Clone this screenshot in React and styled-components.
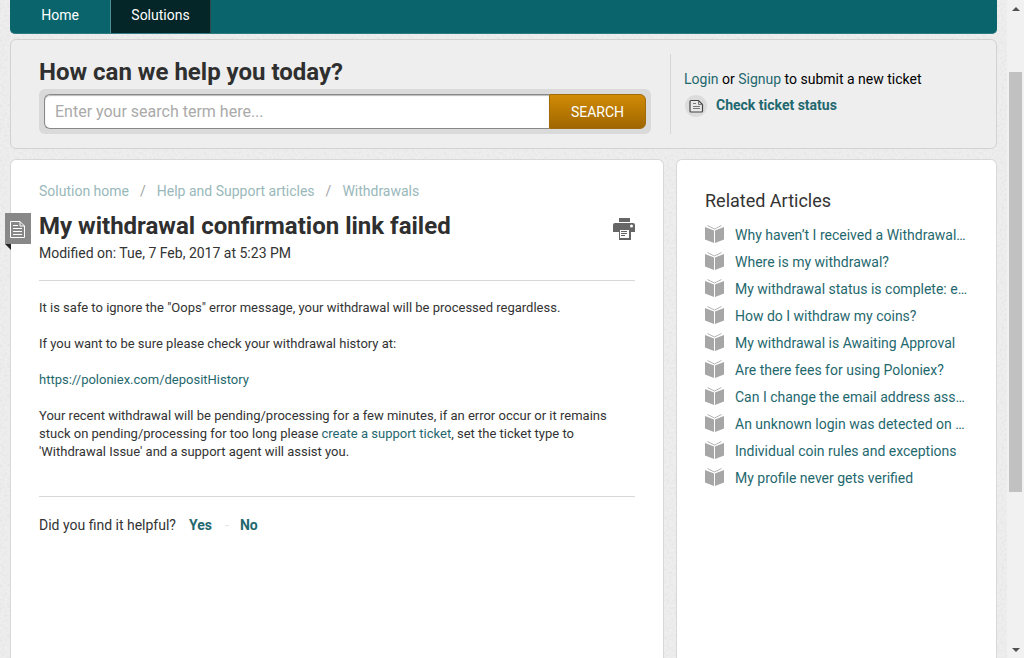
import React from "react";
import styled, { createGlobalStyle } from "styled-components";

const noise = encodeURIComponent(
  `<svg xmlns="http://www.w3.org/2000/svg" width="120" height="120"><filter id="n"><feTurbulence type="fractalNoise" baseFrequency="0.4" numOctaves="2" stitchTiles="stitch"/><feColorMatrix values="0 0 0 0 0.5 0 0 0 0 0.5 0 0 0 0 0.5 0.4 0 0 0 -0.16"/></filter><rect width="120" height="120" filter="url(#n)"/></svg>`
);

const GlobalStyle = createGlobalStyle`
  * {
    box-sizing: border-box;
  }
  body {
    margin: 0;
    overflow: hidden;
    background-color: #eeeeee;
    background-image: url("data:image/svg+xml,${noise}");
    color: #333333;
    font-family: Roboto, "Liberation Sans", sans-serif;
    font-size: 14px;
    line-height: 20px;
  }
`;

const Page = styled.div`
  display: flex;
  height: 100vh;
`;

const Content = styled.div`
  flex: 1;
  min-width: 0;
  padding: 0 10px;
  display: flex;
  flex-direction: column;
`;

const Nav = styled.nav`
  display: flex;
  flex: none;
  height: 34px;
  margin-bottom: 5px;
  overflow: hidden;
  background-color: #0a646b;
  border-bottom: 1px solid #2f7b81;
  border-radius: 0 0 5px 5px;
`;

const NavLink = styled.a`
  width: 100px;
  padding-top: 5px;
  text-align: center;
  text-decoration: none;
  color: #ffffff;
  background-color: ${(props) => (props.$active ? "#042628" : "transparent")};
  border-right: 1px solid ${(props) => (props.$active ? "#2f4a4c" : "#4c9095")};
  &:first-child {
    width: 101px;
  }
`;

const HelpPanel = styled.section`
  display: flex;
  flex: none;
  padding: 14px 28px;
  margin-bottom: 10px;
  background-color: #eeeeee;
  border: 1px solid #d2d2d2;
  border-radius: 6px;
`;

const SearchArea = styled.div`
  flex: 1;
  min-width: 0;
  margin-right: 19px;
`;

const Title = styled.h1`
  margin: 0;
  font-size: 24px;
  line-height: 30px;
  font-weight: 700;
  color: #2f2f2f;
`;

const SearchTitle = styled(Title)`
  padding: 3px 0 2px;
`;

const SearchForm = styled.form`
  display: flex;
  padding: 5px;
  background-color: #dadada;
  border-radius: 6px;
`;

const SearchInput = styled.input`
  flex: 1;
  min-width: 0;
  height: 35px;
  padding: 0 10px;
  font-family: inherit;
  font-size: 16px;
  color: #333333;
  background-color: #ffffff;
  border: 1px solid #888888;
  border-right: 0;
  border-radius: 6px 0 0 6px;
  box-shadow: inset 0 1px 1px #bbbbbb;
  outline: none;
  &::placeholder {
    color: #aaaaaa;
    opacity: 1;
  }
`;

const SearchButton = styled.button`
  width: 97px;
  height: 35px;
  padding: 0;
  font-family: inherit;
  font-size: 14px;
  text-transform: uppercase;
  color: #ffffff;
  background: linear-gradient(#d18b05, #9f6600);
  border: 1px solid #a06b0a;
  border-radius: 0 6px 6px 0;
`;

const AccountArea = styled.div`
  flex: none;
  width: 298px;
  padding: 15px 0 0 13px;
  color: #000000;
  border-left: 1px solid #d6d6d6;
`;

const StyledLink = styled.a`
  color: #1f686e;
  text-decoration: none;
  font-weight: ${(props) => (props.$bold ? 700 : 400)};
`;

const TicketStatus = styled.div`
  display: flex;
  align-items: center;
  gap: 8px;
  margin-top: 4px;
`;

const Columns = styled.div`
  display: grid;
  flex: 1;
  grid-template-columns: minmax(0, 1fr) 321px;
  gap: 12px;
`;

const Card = styled.div`
  position: relative;
  padding: 21px 28px;
  background-color: #ffffff;
  border: 1px solid #d8d8d8;
  border-bottom: 0;
  border-radius: 6px 6px 0 0;
`;

const Breadcrumb = styled.nav`
  display: flex;
  gap: 11px;
  margin-bottom: 10px;
  color: #a2a2a2;
`;

const BreadcrumbLink = styled(StyledLink)`
  color: #99b8ba;
`;

const ArticleHeader = styled.header`
  display: flex;
  align-items: flex-start;
  justify-content: space-between;
  padding-bottom: 17px;
  border-bottom: 1px solid #d8d8d8;
`;

const Modified = styled.div`
  margin-top: 2px;
`;

const PrintButton = styled.button`
  display: flex;
  padding: 0;
  margin-top: 7px;
  background: none;
  border: 0;
`;

const Ribbon = styled.div`
  position: absolute;
  top: 53px;
  left: -6px;
  display: flex;
`;

const ArticleBody = styled.div`
  padding: 18px 0 35px;
  font-size: 13px;
  line-height: 18px;
  border-bottom: 1px solid #d8d8d8;
`;

const Paragraph = styled.p`
  margin: 0;
  & + & {
    margin-top: 18px;
  }
`;

const Feedback = styled.div`
  display: flex;
  gap: 11px;
  padding-top: 18px;
`;

const VoteButton = styled.button`
  padding: 0 2px;
  font: inherit;
  font-weight: 700;
  color: #1f686e;
  background: none;
  border: 0;
`;

const Dash = styled.span`
  width: 2px;
  color: #e4e4e4;
`;

const SidebarTitle = styled.h3`
  margin: 10px 0 14px;
  font-size: 18px;
  font-weight: 400;
`;

const ArticleList = styled.ul`
  margin: 0;
  padding: 0;
  list-style: none;
`;

const ArticleItem = styled.li`
  display: flex;
  gap: 11px;
  height: 27px;
`;

const ArticleLink = styled(StyledLink)`
  flex: 1;
  min-width: 0;
  overflow: hidden;
  text-overflow: ellipsis;
  white-space: nowrap;
`;

const Scrollbar = styled.div`
  display: flex;
  flex: none;
  flex-direction: column;
  align-items: center;
  width: 17px;
  padding: 7px 0 6px;
  background-color: #f1f1f1;
`;

const ScrollTrack = styled.div`
  flex: 1;
  width: 13px;
  padding-top: 61px;
`;

const ScrollThumb = styled.div`
  height: 73%;
  background-color: #c1c1c1;
`;

const Arrow = ({ down }) => (
  <svg width="8" height="4" viewBox="0 0 8 4">
    <path d={down ? "M0 0h8L4 4z" : "M0 4h8L4 0z"} fill="#505050" />
  </svg>
);

const TicketIcon = () => (
  <svg width="24" height="24" viewBox="0 0 24 24" fill="none">
    <circle cx="12" cy="13" r="11" fill="#dcdcdc" />
    <path
      d="M7 7.5h7.5l4 4V18q0 1-1 1H7q-1 0-1-1V8.5q0-1 1-1z"
      fill="#e8e8e8"
      stroke="#444"
      strokeWidth="1.2"
    />
    <path d="M14.5 8v3.5h4M9 10.5h3M9 13.5h7M9 15.5h7" stroke="#777" />
  </svg>
);

const RibbonIcon = () => (
  <svg width="26" height="37" viewBox="0 0 26 37" fill="none">
    <path d="M0 31h6v6z" fill="#222" />
    <path d="M0 0h26v31H0z" fill="#888" />
    <path d="M5.5 8.5H15l4.5 4.5v11.5h-14zM15 8.5V13h4.5" stroke="#fff" />
    <path d="M8 12.5h5M8 15.5h9M8 18.5h9M8 21.5h9" stroke="#fff" />
  </svg>
);

const PrintIcon = () => (
  <svg width="22" height="22" viewBox="0 0 22 22">
    <path d="M6 0h11v4H6z" fill="#666" />
    <path d="M2 5h18q2 0 2 2v7h-4v8H6v-8H0V7q0-2 2-2z" fill="#666" />
    <circle cx="18.5" cy="8" r="1.5" fill="#fff" />
    <path d="M7 12h9v8H7z" fill="#fff" />
    <path d="M8 13.5h6M8 15.5h6M8 17.5h4" stroke="#666" />
  </svg>
);

const BookIcon = () => (
  <svg width="19" height="18" viewBox="0 0 19 18">
    <path d="M0 2l9 3.5V18l-9-3.500zM19 2l-9 3.500V18l9-3.500z" fill="#a6a6a6" />
    <path d="M2.5 .5L9.500 4l7-3.500" fill="none" stroke="#b5b5b5" />
  </svg>
);

const articles = [
  "Why haven’t I received a Withdrawal Confirmation Email?",
  "Where is my withdrawal?",
  "My withdrawal status is complete: error",
  "How do I withdraw my coins?",
  "My withdrawal is Awaiting Approval",
  "Are there fees for using Poloniex?",
  "Can I change the email address associated with my account?",
  "An unknown login was detected on my account",
  "Individual coin rules and exceptions",
  "My profile never gets verified",
];

const App = () => {
  return (
    <>
      <GlobalStyle />
      <Page>
        <Content>
          <Nav>
            <NavLink href="#home">Home</NavLink>
            <NavLink href="#solutions" $active>
              Solutions
            </NavLink>
          </Nav>
          <HelpPanel>
            <SearchArea>
              <SearchTitle as="h2">How can we help you today?</SearchTitle>
              <SearchForm onSubmit={(e) => e.preventDefault()}>
                <SearchInput
                  type="text"
                  aria-label="Search"
                  placeholder="Enter your search term here..."
                />
                <SearchButton type="submit">Search</SearchButton>
              </SearchForm>
            </SearchArea>
            <AccountArea>
              <div>
                <StyledLink href="#login">Login</StyledLink> or{" "}
                <StyledLink href="#signup">Signup</StyledLink> to submit a new
                ticket
              </div>
              <TicketStatus>
                <TicketIcon />
                <StyledLink href="#status" $bold>
                  Check ticket status
                </StyledLink>
              </TicketStatus>
            </AccountArea>
          </HelpPanel>
          <Columns>
            <Card as="main">
              <Ribbon>
                <RibbonIcon />
              </Ribbon>
              <Breadcrumb>
                <BreadcrumbLink href="#solutions">Solution home</BreadcrumbLink>
                <span>/</span>
                <BreadcrumbLink href="#help">
                  Help and Support articles
                </BreadcrumbLink>
                <span>/</span>
                <BreadcrumbLink href="#withdrawals">Withdrawals</BreadcrumbLink>
              </Breadcrumb>
              <ArticleHeader>
                <div>
                  <Title>My withdrawal confirmation link failed</Title>
                  <Modified>Modified on: Tue, 7 Feb, 2017 at 5:23 PM</Modified>
                </div>
                <PrintButton aria-label="Print this article">
                  <PrintIcon />
                </PrintButton>
              </ArticleHeader>
              <ArticleBody>
                <Paragraph>
                  It is safe to ignore the "Oops" error message, your withdrawal
                  will be processed regardless.
                </Paragraph>
                <Paragraph>
                  If you want to be sure please check your withdrawal history
                  at:
                </Paragraph>
                <Paragraph>
                  <StyledLink href="#history">
                    https://poloniex.com/depositHistory
                  </StyledLink>
                </Paragraph>
                <Paragraph>
                  Your recent withdrawal will be pending/processing for a few
                  minutes, if an error occur or it remains stuck on
                  pending/processing for too long please{" "}
                  <StyledLink href="#ticket">create a support ticket</StyledLink>
                  , set the ticket type to 'Withdrawal Issue' and a support
                  agent will assist you.
                </Paragraph>
              </ArticleBody>
              <Feedback>
                <span>Did you find it helpful?</span>
                <VoteButton>Yes</VoteButton>
                <Dash>-</Dash>
                <VoteButton>No</VoteButton>
              </Feedback>
            </Card>
            <Card as="aside">
              <SidebarTitle>Related Articles</SidebarTitle>
              <ArticleList>
                {articles.map((article) => (
                  <ArticleItem key={article}>
                    <BookIcon />
                    <ArticleLink href="#article">{article}</ArticleLink>
                  </ArticleItem>
                ))}
              </ArticleList>
            </Card>
          </Columns>
        </Content>
        <Scrollbar aria-hidden="true">
          <Arrow />
          <ScrollTrack>
            <ScrollThumb />
          </ScrollTrack>
          <Arrow down />
        </Scrollbar>
      </Page>
    </>
  );
};

export default App;
